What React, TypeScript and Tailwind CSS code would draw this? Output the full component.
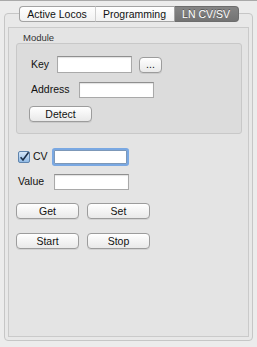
import React from 'react';

const font = { fontFamily: '"Liberation Sans", Arial, sans-serif' };

function Button({ label, className }: { label: string; className: string }) {
  return (
    <div
      className={`flex items-center justify-center rounded-[4px] border border-[#9c9c9c] bg-gradient-to-b from-white to-[#e9e9e9] text-[10.5px] leading-none text-[#111] shadow-[0_1px_0_rgba(0,0,0,0.08)] ${className}`}
    >
      {label}
    </div>
  );
}

function TextField({ className }: { className: string }) {
  return (
    <div
      className={`border border-[#a9a9a9] border-t-[#8f8f8f] bg-white shadow-[inset_0_1px_1px_rgba(0,0,0,0.12)] ${className}`}
    />
  );
}

export default function App() {
  return (
    <div
      className="w-[257px] h-[347px] overflow-hidden border-t border-[#a9a9a9] bg-[#ececec] text-[#111]"
      style={font}
    >
      <div className="flex flex-col px-[4px]">
        {/* tabs */}
        <div className="relative z-10 mt-[5px] flex h-[16px] justify-center text-[10.5px] leading-none">
          <div className="flex w-[76px] items-center justify-center rounded-l-[4px] border border-r-0 border-[#a3a3a3] bg-gradient-to-b from-white to-[#f1f1f1]">
            Active Locos
          </div>
          <div className="flex w-[80px] items-center justify-center border border-[#a3a3a3] border-l-[#cfcfcf] bg-gradient-to-b from-white to-[#f1f1f1]">
            Programming
          </div>
          <div className="flex w-[64px] items-center justify-center rounded-r-[4px] border border-l-0 border-[#6d6d6d] bg-gradient-to-b from-[#858585] to-[#737373] text-white [text-shadow:0_-1px_0_rgba(0,0,0,0.35)]">
            LN CV/SV
          </div>
        </div>

        {/* tab pane */}
        <div className="-mt-[9px] flex h-[328px] flex-col rounded-[4px] border border-[#c6c6c6] bg-[#e8e8e8] px-[3px] pb-[3px] pt-[13px]">
          <div className="flex flex-1 flex-col border border-[#cacaca] bg-[#e4e4e4]">
            <div className="ml-[14px] mt-[4px] h-[11px] text-[9.5px] leading-[11px] text-[#333]">Module</div>

            {/* module group */}
            <div className="ml-[7px] flex h-[91px] w-[226px] flex-col rounded-[3px] border border-[#c8c8c8] bg-[#dcdcdc]">
              <div className="ml-[14px] mt-[12px] flex items-center">
                <span className="w-[26px] text-[10.5px]">Key</span>
                <TextField className="h-[17px] w-[75px]" />
                <Button label="..." className="ml-[7px] h-[16px] w-[23px]" />
              </div>
              <div className="ml-[14px] mt-[9px] flex items-center">
                <span className="w-[48px] text-[10.5px]">Address</span>
                <TextField className="h-[16px] w-[75px]" />
              </div>
              <Button label="Detect" className="ml-[12px] mt-[8px] h-[16px] w-[63px]" />
            </div>

            {/* CV */}
            <div className="ml-[9px] mt-[15px] flex items-center">
              <svg width="12" height="12" viewBox="0 0 12 12">
                <defs>
                  <linearGradient id="cb" x1="0" y1="0" x2="0" y2="1">
                    <stop offset="0" stopColor="#d9e9f9" />
                    <stop offset="1" stopColor="#8db8e4" />
                  </linearGradient>
                </defs>
                <rect x="0.5" y="0.5" width="11" height="11" rx="1.5" fill="url(#cb)" stroke="#5f84ad" />
                <path d="M2.6 6.2 L5 9 L10.6 1.2" fill="none" stroke="#1c2f48" strokeWidth="1.6" />
              </svg>
              <span className="ml-[3px] w-[21px] text-[10.5px]">CV</span>
              <div className="h-[14px] w-[73px] rounded-[1px] border border-[#7d98b8] bg-white shadow-[0_0_0_2px_#7aa8e2]" />
            </div>
            <div className="ml-[9px] mt-[9px] flex items-center">
              <span className="w-[36px] text-[10.5px]">Value</span>
              <TextField className="h-[16px] w-[75px]" />
            </div>

            <div className="ml-[7px] mt-[13px] flex gap-[8px]">
              <Button label="Get" className="h-[16px] w-[63px]" />
              <Button label="Set" className="h-[16px] w-[63px]" />
            </div>
            <div className="ml-[7px] mt-[14px] flex gap-[8px]">
              <Button label="Start" className="h-[16px] w-[63px]" />
              <Button label="Stop" className="h-[16px] w-[63px]" />
            </div>
          </div>
        </div>
      </div>
    </div>
  );
}
